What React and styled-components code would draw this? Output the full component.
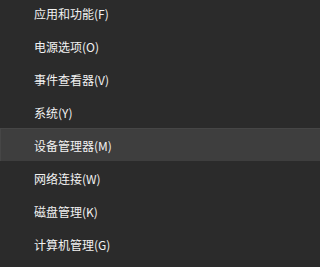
import React from 'react';
import styled, { createGlobalStyle } from 'styled-components';

const GlobalStyle = createGlobalStyle`
  html, body {
    margin: 0;
    padding: 0;
    background: #2b2b2b;
  }
`;

const items = [
  { label: '应用和功能(F)' },
  { label: '电源选项(O)' },
  { label: '事件查看器(V)' },
  { label: '系统(Y)' },
  { label: '设备管理器(M)', active: true },
  { label: '网络连接(W)' },
  { label: '磁盘管理(K)' },
  { label: '计算机管理(G)' },
];

function App() {
  return (
    <>
      <GlobalStyle />
      <Menu>
        {items.map((item) => (
          <MenuItem key={item.label} $active={item.active}>
            {item.label}
          </MenuItem>
        ))}
      </Menu>
    </>
  );
}

const Menu = styled.div`
  width: 100%;
  height: 271px;
  overflow: hidden;
  background: #2b2b2b;
  display: flex;
  flex-direction: column;
  margin-top: -4px;
`;

const MenuItem = styled.div`
  flex: 0 0 33px;
  display: flex;
  align-items: center;
  padding-left: 33px;
  padding-top: 1px;
  box-sizing: border-box;
  font-family: "Noto Sans CJK SC", "Noto Sans", sans-serif;
  font-size: 12px;
  color: #f2f2f2;
  background: ${(p) => (p.$active ? '#3e3e3e' : 'transparent')};
  border-top: 1px solid ${(p) => (p.$active ? '#464646' : 'transparent')};
  border-left: 1px solid ${(p) => (p.$active ? '#464646' : 'transparent')};
`;

export default App;
